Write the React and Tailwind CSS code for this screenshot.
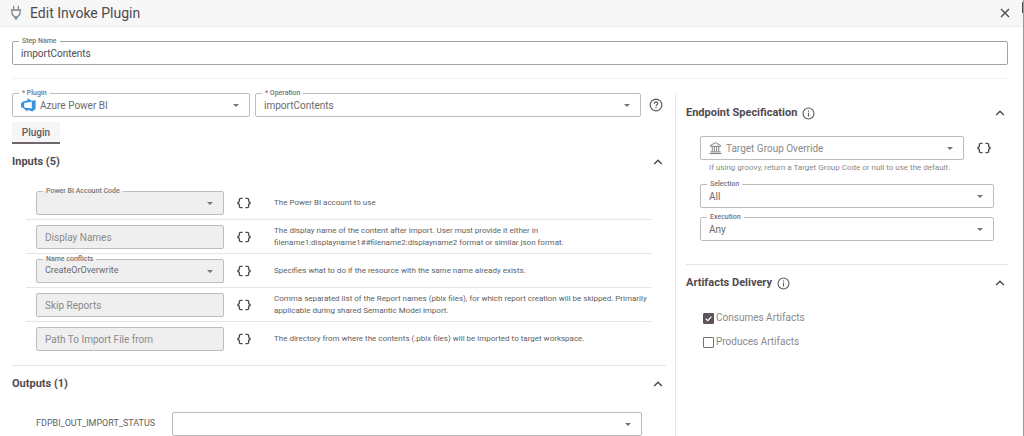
import { useState } from 'react'

const INPUTS = [
  {
    id: 'account',
    label: 'Power BI Account Code',
    type: 'select',
    options: [''],
    help: 'The Power BI account to use',
  },
  {
    id: 'displayNames',
    label: 'Display Names',
    type: 'text',
    help: 'The display name of the content after import. User must provide it either in filename1:displayname1##filename2:displayname2 format or similar json format.',
  },
  {
    id: 'conflicts',
    label: 'Name conflicts',
    type: 'select',
    options: ['CreateOrOverwrite', 'Abort', 'Ignore'],
    help: 'Specifies what to do if the resource with the same name already exists.',
  },
  {
    id: 'skipReports',
    label: 'Skip Reports',
    type: 'text',
    help: 'Comma separated list of the Report names (pbix files), for which report creation will be skipped. Primarily applicable during shared Semantic Model import.',
  },
  {
    id: 'path',
    label: 'Path To Import File from',
    type: 'text',
    help: 'The directory from where the contents (.pbix files) will be imported to target workspace.',
  },
]

function PlugIcon() {
  return (
    <svg viewBox="0 0 12 16" className="h-4 w-3" fill="none" stroke="#858585" strokeWidth="1.3">
      <path d="M3.7 5V.8M8.300 5V.8" />
      <path d="M1 5h10M2 5v4l2.600 3h2.800L10 9V5" strokeLinejoin="round" />
      <path d="M6 12v1" />
      <path d="M4.500 13.500h3" stroke="#4a9fe0" strokeWidth="1.800" />
      <path d="M.8 5h1.800M9.400 5h1.800" stroke="#6aaee2" />
    </svg>
  )
}

function AzureIcon() {
  return (
    <svg viewBox="0 0 15 14" className="h-[14px] w-[15px]" fill="#3b93dc" fillRule="evenodd">
      <path d="M0 5.500L1.500 3.800 6.500 2.300V.3l4.300 2.500 3.800-.5v8.700L11.300 13.500 6.500 11.800v1.900L1.800 9.800 0 9.200zM3.200 5v4.600l7.600 1V3.700z" />
    </svg>
  )
}

function BankIcon() {
  return (
    <svg viewBox="0 0 14 14" className="h-[14px] w-[13px]" fill="none" stroke="#757575" strokeWidth="1">
      <path d="M1.5 5.2V4.3L7 1.2l5.5 3.1v.9zM3.5 5.5v5.2M5.8 5.5v5.2M8.2 5.5v5.2M10.5 5.5v5.2M1.5 11.2h11M.5 13h13" />
    </svg>
  )
}

function InfoIcon() {
  return (
    <svg viewBox="0 0 14 14" className="h-[13px] w-[13px]" fill="none" stroke="#5f5a5f" strokeWidth="1.2">
      <circle cx="7" cy="7" r="5.9" />
      <path d="M7 6.2v4M7 3.8v1.2" />
    </svg>
  )
}

function HelpIcon() {
  return (
    <svg viewBox="0 0 14 14" className="h-[14px] w-[14px]" fill="none" stroke="#5f5a5f" strokeWidth="1.2">
      <circle cx="7" cy="7" r="5.8" />
      <path d="M5.2 5.7C5.2 4.6 6 3.9 7 3.9s1.8.7 1.8 1.7C8.8 6.8 7 6.9 7 8.3M7 9.3v1.2" />
    </svg>
  )
}

function BracesButton({ label }) {
  return (
    <button type="button" aria-label={label} className="flex h-6 w-5 shrink-0 items-center justify-center">
      <svg viewBox="0 0 24 24" className="h-4 w-4" fill="#504a50">
        <path d="M4 7v2c0 .55-.45 1-1 1H2v4h1c.55 0 1 .45 1 1v2c0 1.65 1.35 3 3 3h3v-2H7c-.55 0-1-.45-1-1v-2c0-1.3-.84-2.42-2-2.83v-.34C5.16 11.42 6 10.3 6 9V7c0-.55.45-1 1-1h3V4H7C5.35 4 4 5.35 4 7zM21 10c-.55 0-1-.45-1-1V7c0-1.65-1.35-3-3-3h-3v2h3c.55 0 1 .45 1 1v2c0 1.3.84 2.42 2 2.83v.34c-1.16.41-2 1.52-2 2.83v2c0 .55-.45 1-1 1h-3v2h3c1.65 0 3-1.35 3-3v-2c0-.55.45-1 1-1h1v-4z" />
      </svg>
    </button>
  )
}

function ChevronButton({ label, open, onClick }) {
  return (
    <button type="button" aria-label={label} aria-expanded={open} onClick={onClick} className="flex h-4 w-4 items-center justify-center">
      <svg viewBox="0 0 10 6" className="h-[6px] w-[10px]" fill="none" stroke="#504a50" strokeWidth="1.5">
        <path d={open ? 'M1.2 5l3.8-3.7L8.8 5' : 'M1.2 1L5 4.700 8.800 1'} />
      </svg>
    </button>
  )
}

// Outlined field, the label sits in the top border
function Field({ id, label, filled, dark, icon, className = '', children }) {
  return (
    <div
      className={`relative flex h-6 items-center rounded-[2px] border pl-2 ${dark ? 'border-[#a3a3a3]' : 'border-[#bdbdbd]'} ${filled ? 'bg-[#efefef]' : 'bg-white'} ${className}`}
    >
      {label && (
        <label
          htmlFor={id}
          className={`absolute -top-[6px] left-[6px] bg-linear-to-b from-white from-50% to-50% px-[3px] text-[7px] leading-[10px] font-medium text-[#757575] ${filled ? 'to-[#efefef]' : 'to-white'}`}
        >
          {label}
        </label>
      )}
      {icon && <span className="mr-1 shrink-0">{icon}</span>}
      {children}
    </div>
  )
}

function SelectField({ id, label, options, ariaLabel, muted, ...rest }) {
  return (
    <Field id={id} label={label} {...rest}>
      <select
        id={id}
        aria-label={ariaLabel}
        className={`h-full min-w-0 flex-1 appearance-none bg-transparent outline-none ${rest.filled ? 'text-[9px]' : 'text-[10px]'} ${muted ? 'text-[#8a8a8a]' : 'text-[#6b6b6b]'}`}
      >
        {options.map(o => <option key={o}>{o}</option>)}
      </select>
      <svg viewBox="0 0 6 3" className="pointer-events-none absolute right-[10px] h-[3px] w-[6px]" fill="#757575">
        <path d="M0 0h6L3 3z" />
      </svg>
    </Field>
  )
}

function SectionHeader({ title, info, open, onToggle }) {
  return (
    <div className="flex items-center justify-between">
      <div className="flex items-center gap-[5px]">
        <h2 className="text-[11px] leading-4 font-bold text-[#504a50]">{title}</h2>
        {info && <InfoIcon />}
      </div>
      <ChevronButton label={`Toggle ${title}`} open={open} onClick={onToggle} />
    </div>
  )
}

function InputRow({ item, last }) {
  return (
    <div className={`mx-[14px] flex items-center pt-[5px] pb-1 pl-[10px] ${last ? '' : 'border-b border-[#e6e6e6]'}`}>
      {item.type === 'select' ? (
        <SelectField id={item.id} label={item.label} options={item.options} filled className="w-[188px] shrink-0" />
      ) : (
        <Field filled className="w-[188px] shrink-0">
          <input
            id={item.id}
            aria-label={item.label}
            placeholder={item.label}
            className="h-full w-full bg-transparent text-[10px] text-[#6b6b6b] outline-none placeholder:text-[#8a8a8a]"
          />
        </Field>
      )}
      <div className="mx-[10px] flex">
        <BracesButton label={`Edit ${item.label} as expression`} />
      </div>
      <p className="ml-[10px] max-w-[376px] text-[8px] leading-3 text-[#616161]">{item.help}</p>
    </div>
  )
}

function CheckOption({ label, defaultChecked }) {
  return (
    <label className="flex items-center gap-[2px] text-[10px] leading-3 text-[#8a8a8a]">
      <span className="relative flex">
        <input
          type="checkbox"
          defaultChecked={defaultChecked}
          className="peer h-[11px] w-[11px] appearance-none rounded-[1px] border border-[#757075] checked:border-[#5d535d] checked:bg-[#5d535d]"
        />
        <svg viewBox="0 0 11 11" className="pointer-events-none absolute inset-0 hidden peer-checked:block" fill="none" stroke="#fff" strokeWidth="1.2">
          <path d="M2.8 5.7l2 1.9 3.6-4" />
        </svg>
      </span>
      {label}
    </label>
  )
}

export default function App() {
  const [open, setOpen] = useState({ inputs: true, outputs: true, endpoint: true, artifacts: true })

  function toggle(key) {
    setOpen(prev => ({ ...prev, [key]: !prev[key] }))
  }

  return (
    <div className="relative flex h-screen flex-col overflow-hidden border-r border-[#9a9a9a] bg-white font-[Roboto,sans-serif]">
      <header className="flex shrink-0 items-center border-b border-[#ececec] bg-[#f7f7f7] pt-[3px] pr-3 pb-[3px] pl-[10px]">
        <PlugIcon />
        <h1 className="ml-2 text-[14px] leading-5 text-[#504a50]">Edit Invoke Plugin</h1>
        <button type="button" aria-label="Close" className="ml-auto flex h-4 w-3 items-center justify-center">
          <svg viewBox="0 0 10 10" className="h-[10px] w-[10px]" stroke="#504a50" strokeWidth="1.4">
            <path d="M1 1l8 8M9 1L1 9" />
          </svg>
        </button>
      </header>
      <span className="absolute top-[2px] right-0 h-[11px] w-px bg-[#504a50]" />

      <main className="flex min-h-0 flex-1 flex-col pt-[14px] pr-[15px] pl-3">
        <Field id="stepName" label="Step Name" dark className="shrink-0">
          <input id="stepName" defaultValue="importContents" className="h-full w-full bg-transparent text-[10px] text-[#504a50] outline-none" />
        </Field>
        <hr className="mt-[13px] mb-[14px] border-[#f0f0f0]" />

        <div className="flex min-h-0 flex-1">
          <div className="min-w-0 flex-1 border-r border-[#e6e6e6] pr-[9px]">
            <div className="flex items-center">
              <SelectField id="plugin" label="* Plugin" options={['Azure Power BI']} icon={<AzureIcon />} className="w-[238px]" />
              <SelectField id="operation" label="* Operation" options={['importContents']} className="ml-[5px] flex-1" />
              <button type="button" aria-label="Help" className="mr-[3px] ml-2">
                <HelpIcon />
              </button>
            </div>

            <button type="button" className="mt-[5px] block h-[22px] w-12 border-b-2 border-[#6f666f] bg-[#f6f6f6] text-[10px] font-medium text-[#5f5a5f]">
              Plugin
            </button>

            <section className="mt-[10px] border-b border-[#e6e6e6] pb-[10px]">
              <SectionHeader title="Inputs (5)" open={open.inputs} onToggle={() => toggle('inputs')} />
              {open.inputs && (
                <div className="mt-4">
                  {INPUTS.map((item, i) => (
                    <InputRow key={item.id} item={item} last={i === INPUTS.length - 1} />
                  ))}
                </div>
              )}
            </section>

            <section className="mt-[10px]">
              <SectionHeader title="Outputs (1)" open={open.outputs} onToggle={() => toggle('outputs')} />
              {open.outputs && (
                <div className="mx-6 mt-5 flex items-center">
                  <label htmlFor="importStatus" className="w-[136px] text-[9px] text-[#616161]">FDPBI_OUT_IMPORT_STATUS</label>
                  <SelectField id="importStatus" options={['']} className="flex-1" />
                </div>
              )}
            </section>
          </div>

          <aside className="w-[332px] shrink-0 pt-3 pl-[10px]">
            <section className="border-b border-[#e6e6e6] pb-[23px]">
              <SectionHeader title="Endpoint Specification" info open={open.endpoint} onToggle={() => toggle('endpoint')} />
              {open.endpoint && (
                <div className="mx-[14px] mt-[15px]">
                  <div className="flex items-center justify-between">
                    <SelectField id="target" ariaLabel="Target group override" options={['Target Group Override']} icon={<BankIcon />} muted className="mr-[10px] flex-1" />
                    <BracesButton label="Edit target group as expression" />
                  </div>
                  <p className="mt-[2px] pl-[9px] text-[8px] leading-3 text-[#8a8a8a]">
                    If using groovy, return a Target Group Code or null to use the default.
                  </p>
                  <SelectField id="selection" label="Selection" options={['All', 'Any']} className="mt-[10px]" />
                  <SelectField id="execution" label="Execution" options={['Any', 'All']} className="mt-[9px]" />
                </div>
              )}
            </section>

            <section className="mt-[10px]">
              <SectionHeader title="Artifacts Delivery" info open={open.artifacts} onToggle={() => toggle('artifacts')} />
              {open.artifacts && (
                <div className="mt-[21px] ml-[17px] flex flex-col gap-3">
                  <CheckOption label="Consumes Artifacts" defaultChecked />
                  <CheckOption label="Produces Artifacts" />
                </div>
              )}
            </section>
          </aside>
        </div>
      </main>
    </div>
  )
}
